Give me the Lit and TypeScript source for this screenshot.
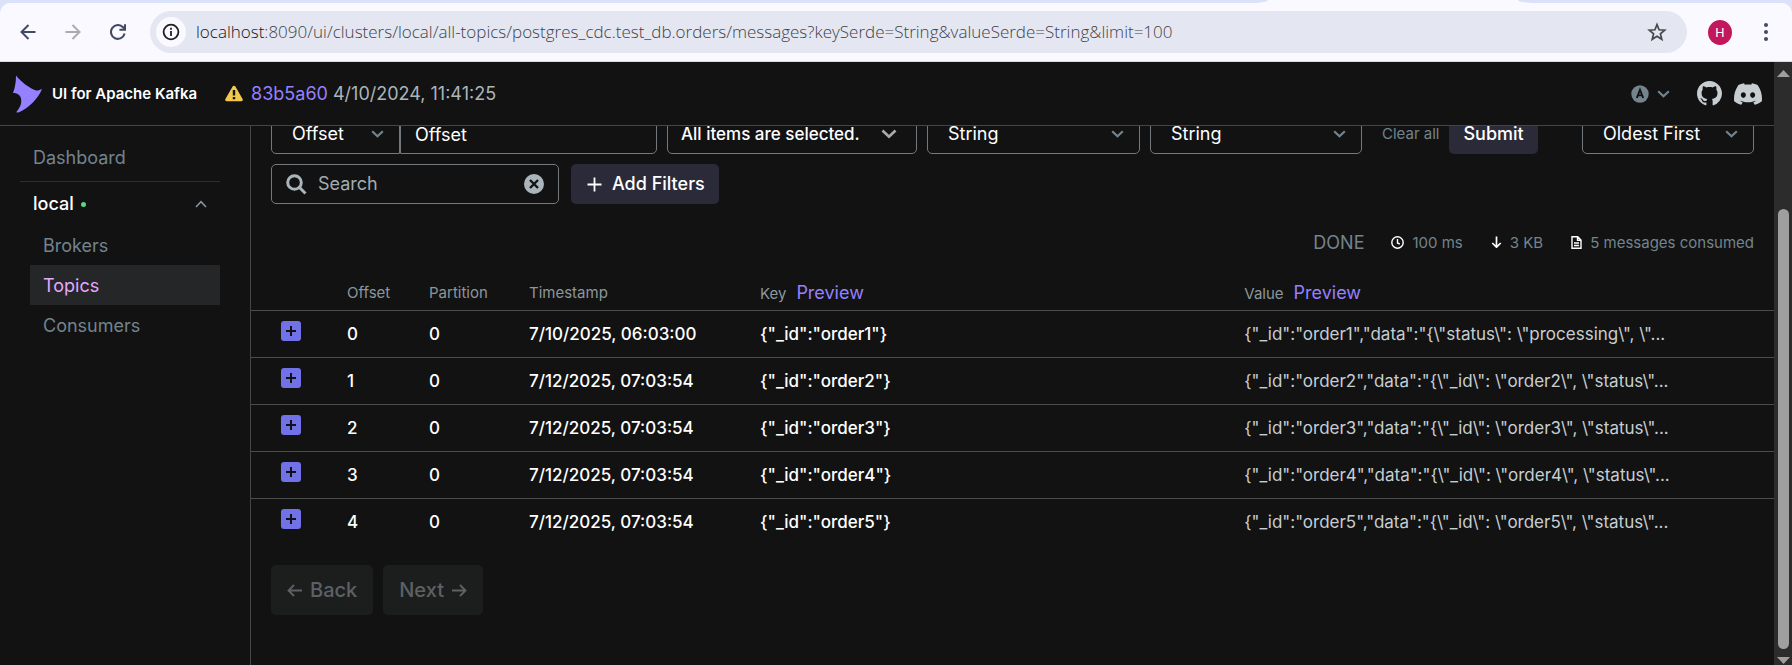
import { LitElement, html, css, svg } from "lit";
import { customElement } from "lit/decorators.js";

interface Message {
  offset: number;
  partition: number;
  timestamp: string;
  key: string;
  value: string;
}

const later = (n: number): Message => ({
  offset: n - 1,
  partition: 0,
  timestamp: "7/12/2025, 07:03:54",
  key: `{"_id":"order${n}"}`,
  value: `{"_id":"order${n}","data":"{\\"_id\\": \\"order${n}\\", \\"status\\"...`,
});

const messages: Message[] = [
  {
    offset: 0,
    partition: 0,
    timestamp: "7/10/2025, 06:03:00",
    key: `{"_id":"order1"}`,
    value: `{"_id":"order1","data":"{\\"status\\": \\"processing\\", \\"...`,
  },
  later(2),
  later(3),
  later(4),
  later(5),
];

const chevron = (width = 13, height = 8) => html`<svg width=${width} height=${height} viewBox="0 0 13 8" aria-hidden="true">
  <path d="M1.2 1.2 6.5 6.2 11.8 1.2" fill="none" stroke="currentColor" stroke-width="2.2" />
</svg>`;

@customElement("browser-bar")
export class BrowserBar extends LitElement {
  static styles = css`
    :host { display: block; background: #d9e2f9; font-family: "Open Sans", "Noto Sans", sans-serif; }
    .tabs { display: flex; height: 3px; background: #faf9ff; }
    .rest { background: #d9e2f9; }
    .before { flex: 1; border-radius: 0 0 16px 0 / 0 0 3px 0; }
    .active { width: 250px; }
    .after { width: 274px; border-radius: 0 0 0 16px / 0 0 0 3px; }
    .bar {
      display: flex; align-items: center; height: 58px; padding: 0 24px 0 16px;
      background: #faf9ff; border-bottom: 1px solid #d5dde0; border-radius: 10px 10px 0 0; color: #414a63;
    }
    button { border: 0; background: none; padding: 0; color: inherit; display: grid; place-items: center; }
    .nav { display: flex; gap: 21px; margin-right: 20px; }
    .nav button { width: 24px; height: 24px; }
    .back, .reload { color: #414a63; }
    .nav .forward { color: #a9abb5; }
    .address {
      flex: 1; display: flex; align-items: center; height: 42px; padding: 0 20px 0 6px;
      background: #e4e7f2; border-radius: 21px; color: #1f1f22;
    }
    .info { width: 30px; height: 30px; border-radius: 50%; background: #faf9ff; margin-right: 10px; }
    .url { flex: 1; font-size: 17px; font-weight: 350; line-height: 24px; color: #414247; white-space: nowrap; }
    .host { color: #131317; }
    .star { color: #46484e; }
    .profile {
      width: 24px; height: 25px; margin: 0 32px 0 21px; border-radius: 50%;
      background: #c2185b; color: #fff; font: 13px/25px Roboto, sans-serif;
    }
  `;

  render() {
    return html`
      <div class="tabs"><div class="rest before"></div><div class="active"></div><div class="rest after"></div></div>
      <div class="bar">
        <div class="nav">
          <button class="back" aria-label="Back"><svg width="16" height="16" viewBox="0 0 16 16" fill="none" stroke="currentColor" stroke-width="2"><path d="M15.5 8H2M8.5 1 1.5 8l7 7" /></svg></button>
          <button class="forward" aria-label="Forward"><svg width="16" height="16" viewBox="0 0 16 16" fill="none" stroke="currentColor" stroke-width="2"><path d="M.5 8H14M7.5 1l7 7-7 7" /></svg></button>
          <button class="reload" aria-label="Reload"><svg width="16" height="16" viewBox="0 0 16 16" fill="none" stroke="currentColor" stroke-width="2.1"><path d="M14.6 9.6A6.9 6.9 0 1 1 13 3.3l1.6 1.8" /><path d="M15 .3v5.5H9.4" /></svg></button>
        </div>
        <div class="address">
          <button class="info" aria-label="Site information"><svg width="18" height="18" viewBox="0 0 18 18" fill="none" stroke="currentColor" stroke-width="1.8"><circle cx="9" cy="9" r="7.4" /><path d="M9 8v5M9 4.8v1.9" /></svg></button>
          <span class="url"><span class="host">localhost</span>:8090/ui/clusters/local/all-topics/postgres_cdc.test_db.orders/messages?keySerde=String&amp;valueSerde=String&amp;limit=100</span>
          <button class="star" aria-label="Bookmark"><svg width="20" height="20" viewBox="0 0 20 20" fill="none" stroke="currentColor" stroke-width="1.7"><path d="M10 2.6l2.1 5.2 5.6.4-4.3 3.6 1.4 5.5L10 14.3l-4.8 3 1.4-5.5-4.3-3.6 5.6-.4z" /></svg></button>
        </div>
        <button class="profile" aria-label="Profile H">H</button>
        <button aria-label="Menu"><svg width="4" height="20" viewBox="0 0 4 20" fill="currentColor"><circle cx="2" cy="3" r="2" /><circle cx="2" cy="10" r="2" /><circle cx="2" cy="17" r="2" /></svg></button>
      </div>
    `;
  }
}

@customElement("app-header")
export class AppHeader extends LitElement {
  static styles = css`
    :host {
      display: flex; align-items: center; height: 63px; padding: 0 12px 0 13px; position: relative; z-index: 1;
      background: #121213; border-bottom: 1px solid #434546; color: #aab5ba; font-size: 18px; line-height: 24px;
    }
    .brand { color: #fff; font-size: 15px; font-weight: 600; margin: 0 28px 0 9px; }
    .version { display: flex; align-items: center; gap: 8px; flex: 1; }
    a { color: #9580ff; text-decoration: none; display: inline-flex; }
    .user { display: flex; align-items: center; gap: 8px; padding: 0; margin-right: 27px; border: 0; background: none; color: #73848c; }
    .social { display: flex; align-items: center; gap: 12px; }
    .social a { color: #c7ced1; }
  `;

  render() {
    return html`
      <svg width="30" height="38" viewBox="0 0 30 38" fill="#9580ff" aria-hidden="true"><path d="M3 0.5C8 7 17 13.5 23 15.5c2 .4 4-.6 6-1.8C26 23 15 33.5 5.5 37.5L3 37.3C7 33 9 28.5 8 23.5 7.5 20 4 18 0 18 2 13 3 7 3 .5z" /></svg>
      <span class="brand">UI for Apache Kafka</span>
      <div class="version">
        <svg width="18" height="17" viewBox="0 0 18 17" aria-hidden="true"><path d="M9 .7c.6 0 1.1.3 1.4.8l7.2 12.5c.6 1.1 0 2.3-1.3 2.3H1.7c-1.3 0-1.9-1.2-1.3-2.3L7.6 1.5C7.9 1 8.4.7 9 .7z" fill="#f2c94c" /><path d="M9 5v5.5M9 12v2.2" stroke="#121213" stroke-width="2.4" /></svg>
        <span><a href="#">83b5a60</a> 4/10/2024, 11:41:25</span>
      </div>
      <button class="user" aria-label="User menu">
        <svg width="18" height="18" viewBox="0 0 18 18" aria-hidden="true"><circle cx="9" cy="9" r="8.7" fill="currentColor" /><path d="M5.8 13 9 4.8 12.2 13M7 10.4h4" fill="none" stroke="#121213" stroke-width="1.9" /></svg>
        ${chevron()}
      </button>
      <div class="social">
        <a href="#" aria-label="GitHub"><svg width="25" height="25" viewBox="0 0 16 16" fill="currentColor"><path d="M8 0C3.58 0 0 3.58 0 8c0 3.54 2.29 6.53 5.47 7.59.4.07.55-.17.55-.38 0-.19-.01-.82-.01-1.49-2.01.37-2.53-.49-2.69-.94-.09-.23-.48-.94-.82-1.13-.28-.15-.68-.52-.01-.53.63-.01 1.08.58 1.23.82.72 1.21 1.87.87 2.33.66.07-.52.28-.87.51-1.07-1.78-.2-3.64-.89-3.64-3.95 0-.87.31-1.59.82-2.15-.08-.2-.36-1.02.08-2.12 0 0 .67-.21 2.2.82.64-.18 1.32-.27 2-.27s1.36.09 2 .27c1.53-1.04 2.2-.82 2.2-.82.44 1.1.16 1.92.08 2.12.51.56.82 1.27.82 2.15 0 3.07-1.87 3.75-3.65 3.95.29.25.54.73.54 1.48 0 1.07-.01 1.93-.01 2.2 0 .21.15.46.55.38A8.01 8.01 0 0 0 16 8c0-4.42-3.58-8-8-8z" /></svg></a>
        <a href="#" aria-label="Discord"><svg width="28" height="22" viewBox="0 2.85 24 18.3" fill="currentColor"><path d="M20.317 4.3698a19.7913 19.7913 0 00-4.8851-1.5152.0741.0741 0 00-.0785.0371c-.211.3753-.4447.8648-.6083 1.2495-1.8447-.2762-3.68-.2762-5.4868 0-.1636-.3933-.4058-.8742-.6177-1.2495a.077.077 0 00-.0785-.037 19.7363 19.7363 0 00-4.8852 1.515.0699.0699 0 00-.0321.0277C.5334 9.0458-.319 13.5799.0992 18.0578a.0824.0824 0 00.0312.0561c2.0528 1.5076 4.0413 2.4228 5.9929 3.0294a.0777.0777 0 00.0842-.0276c.4616-.6304.8731-1.2952 1.226-1.9942a.076.076 0 00-.0416-.1057c-.6528-.2476-1.2743-.5495-1.8722-.8923a.077.077 0 01-.0076-.1277c.1258-.0943.2517-.1923.3718-.2914a.0743.0743 0 01.0776-.0105c3.9278 1.7933 8.18 1.7933 12.0614 0a.0739.0739 0 01.0785.0095c.1202.099.246.1981.3728.2924a.077.077 0 01-.0066.1276 12.2986 12.2986 0 01-1.873.8914.0766.0766 0 00-.0407.1067c.3604.698.7719 1.3628 1.225 1.9932a.076.076 0 00.0842.0286c1.961-.6067 3.9495-1.5219 6.0023-3.0294a.077.077 0 00.0313-.0552c.5004-5.177-.8382-9.6739-3.5485-13.6604a.061.061 0 00-.0312-.0286zM8.02 15.3312c-1.1825 0-2.1569-1.0857-2.1569-2.419 0-1.3332.9555-2.4189 2.157-2.4189 1.2108 0 2.1757 1.0952 2.1568 2.419 0 1.3332-.9555 2.4189-2.1569 2.4189zm7.9748 0c-1.1825 0-2.1569-1.0857-2.1569-2.419 0-1.3332.9554-2.4189 2.1569-2.4189 1.2108 0 2.1757 1.0952 2.1568 2.419 0 1.3332-.946 2.4189-2.1568 2.4189Z" /></svg></a>
      </div>
    `;
  }
}

@customElement("app-sidebar")
export class AppSidebar extends LitElement {
  static styles = css`
    :host { display: block; box-sizing: border-box; width: 251px; padding: 12px 30px 0 20px; border-right: 1px solid #434546; font-size: 18px; line-height: 24px; }
    a { display: flex; align-items: center; height: 40px; padding: 0 13px; color: #73848c; text-decoration: none; }
    .dashboard { padding-bottom: 3px; border-bottom: 1px solid #2b2d2f; }
    .cluster {
      display: flex; align-items: center; width: 100%; height: 40px; margin: 2px 0 1px; padding: 0 13px;
      border: 0; background: none; color: #fff; font: inherit; font-weight: 500;
    }
    .dot { width: 5px; height: 5px; margin-left: 7px; border-radius: 50%; background: #5cd685; }
    .cluster svg { margin-left: auto; }
    .items { margin-left: 10px; }
    .items a { box-sizing: border-box; padding-top: 2px; }
    .current { background: #242628; color: #e5a8ff; }
  `;

  render() {
    return html`
      <nav>
        <a class="dashboard" href="#">Dashboard</a>
        <button class="cluster">
          local<span class="dot"></span>
          <svg width="12" height="8" viewBox="0 0 12 8" aria-hidden="true"><path d="M1 7 6 1.7 11 7" fill="none" stroke="#8b979c" stroke-width="1.5" /></svg>
        </button>
        <div class="items">
          <a href="#">Brokers</a>
          <a class="current" href="#" aria-current="page">Topics</a>
          <a href="#">Consumers</a>
        </div>
      </nav>
    `;
  }
}

@customElement("topic-messages")
export class TopicMessages extends LitElement {
  static styles = css`
    :host { display: block; flex: 1; min-width: 0; margin-top: -12px; font-size: 18px; line-height: 24px; color: #fff; }
    button, select, input { font: inherit; color: inherit; }
    .row { display: flex; padding: 0 20px; }
    .field { box-sizing: border-box; height: 40px; border: 1px solid #73797c; border-radius: 5px; background: none; }
    .select { display: grid; color: #73848c; }
    .select > * { grid-area: 1 / 1; }
    .select svg { justify-self: end; align-self: center; margin-right: 16px; pointer-events: none; }
    .select select { appearance: none; width: 100%; padding: 0 20px; color: #fff; outline: 0; }
    .seek { width: 129px; }
    .seek select { border-radius: 5px 0 0 5px; }
    .offset { width: 257px; padding: 0 14px; border-radius: 0 5px 5px 0; outline: 0; }
    .offset::placeholder { color: #fff; opacity: 1; }
    .partitions { display: flex; align-items: center; justify-content: space-between; width: 250px; margin: 0 10px; padding: 0 19px 0 13px; font-size: 17px; font-weight: 500; }
    .partitions svg { color: #aaa; }
    .serde { width: 213px; margin-right: 10px; }
    .serde + .serde { width: 212px; }
    .clear-all { padding: 0; margin: 0 10px; border: 0; background: none; color: #73848c; font-size: 15px; }
    .primary { display: flex; align-items: center; height: 40px; border: 0; border-radius: 5px; background: #2a2a39; font-weight: 500; }
    .submit { padding: 0 14px; }
    .order { width: 172px; margin-left: auto; }
    .filters { margin-top: 10px; gap: 12px; }
    .search { display: flex; align-items: center; width: 288px; padding: 0 14px; gap: 11px; }
    .search input { flex: 1; min-width: 0; padding: 0; border: 0; background: none; outline: 0; }
    .search input::placeholder { color: #a3acb0; opacity: 1; }
    .search button { display: flex; padding: 0; border: 0; background: none; }
    .add { gap: 10px; padding: 0 14px 0 16px; }
    .stats { justify-content: flex-end; align-items: center; margin-top: 27px; color: #73848c; font-size: 15px; }
    .done { font-size: 18px; margin-right: 27px; }
    .stat { display: flex; align-items: center; gap: 8px; margin-left: 28px; color: #73848c; }
    .done + .stat { margin-left: 0; }
    .stat svg { color: #fff; margin-bottom: 2px; }
    table { width: 100%; margin-top: 19px; border-collapse: collapse; table-layout: fixed; font-size: 17px; }
    th, td { padding: 0; text-align: left; font-weight: 500; white-space: nowrap; overflow: hidden; }
    th { height: 34px; padding-top: 2px; font-size: 15px; font-weight: 400; color: #8b979c; }
    thead tr, tbody tr:not(:last-child) { border-bottom: 1px solid #4a4c4d; }
    tbody td { height: 46px; }
    .c-toggle { width: 96px; }
    .c-offset { width: 82px; }
    .c-partition { width: 100px; }
    .c-time { width: 231px; }
    .c-key { width: 31.8%; }
    .preview { padding: 0; margin-left: 10px; border: 0; background: none; color: #9580ff; font-size: 18px; }
    .expand { display: grid; place-items: center; width: 20px; height: 20px; margin: 0 0 6px 30px; padding: 0; border: 0; border-radius: 3px; background: #7171e8; }
    .value { color: #c7ced1; font-weight: 400; }
    .pager { gap: 10px; margin-top: 20px; }
    .pager button { display: flex; align-items: center; gap: 7px; height: 50px; padding: 0 16px; border: 0; border-radius: 5px; background: #1c1e1e; color: #5c6164; font-size: 20px; font-weight: 500; }
  `;

  private select(cls: string, label: string, value: string) {
    return html`<div class="select ${cls}">
      <select class="field" aria-label=${label}><option>${value}</option></select>
      ${chevron()}
    </div>`;
  }

  private messageRow(m: Message) {
    return html`<tr>
      <td><button class="expand" aria-label="Expand message">
        <svg width="10" height="10" viewBox="0 0 10 10"><path d="M5 0v10M0 5h10" stroke="#121213" stroke-width="2" /></svg>
      </button></td>
      <td>${m.offset}</td>
      <td>${m.partition}</td>
      <td>${m.timestamp}</td>
      <td>${m.key}</td>
      <td class="value">${m.value}</td>
    </tr>`;
  }

  render() {
    const arrow = svg`<path d="M15 6.5H1.5M7 1 1.5 6.5 7 12" fill="none" stroke="currentColor" stroke-width="1.8" />`;
    return html`
      <div class="row">
        ${this.select("seek", "Seek type", "Offset")}
        <input class="field offset" aria-label="Offset" placeholder="Offset" />
        <button class="field partitions">All items are selected.${chevron(16, 10)}</button>
        ${this.select("serde", "Key serde", "String")}
        ${this.select("serde", "Value serde", "String")}
        <button class="clear-all">Clear all</button>
        <button class="primary submit">Submit</button>
        ${this.select("order", "Order", "Oldest First")}
      </div>
      <div class="row filters">
        <label class="field search">
          <svg width="21" height="21" viewBox="0 0 21 21" fill="none" stroke="#a9b5bb" stroke-width="3"><circle cx="8.5" cy="8.5" r="6.8" /><path d="M13.5 13.5l6 6" /></svg>
          <input type="text" placeholder="Search" aria-label="Search" />
          <button aria-label="Clear search"><svg width="20" height="20" viewBox="0 0 20 20"><circle cx="10" cy="10" r="10" fill="#a9b5bb" /><path d="M6 6l8 8M14 6l-8 8" stroke="#121213" stroke-width="2.4" /></svg></button>
        </label>
        <button class="primary add"><svg width="15" height="15" viewBox="0 0 15 15"><path d="M7.5 .5v14M.5 7.5h14" stroke="#fff" stroke-width="1.8" /></svg>Add Filters</button>
      </div>
      <div class="row stats">
        <span class="done">DONE</span>
        <span class="stat"><svg width="13" height="13" viewBox="0 0 13 13" fill="none" stroke="currentColor" stroke-width="1.4"><circle cx="6.5" cy="6.5" r="5.7" /><path d="M6.5 3v4l2.3 1" /></svg>100 ms</span>
        <span class="stat"><svg width="11" height="12" viewBox="0 0 11 12" fill="none" stroke="currentColor" stroke-width="1.7"><path d="M5.5 .5v10.5M1.3 7l4.2 4.2L9.7 7" /></svg>3 KB</span>
        <span class="stat"><svg width="11" height="13" viewBox="0 0 11 13" fill="none" stroke="currentColor" stroke-width="1.4"><path d="M1 .8h5.7L10 4v8.2H1zM6.5 1v3.3H10M3 7h5M3 9.5h5" /></svg>5 messages consumed</span>
      </div>
      <table>
        <colgroup><col class="c-toggle" /><col class="c-offset" /><col class="c-partition" /><col class="c-time" /><col class="c-key" /><col /></colgroup>
        <thead>
          <tr>
            <th></th><th>Offset</th><th>Partition</th><th>Timestamp</th>
            <th>Key<button class="preview">Preview</button></th>
            <th>Value<button class="preview">Preview</button></th>
          </tr>
        </thead>
        <tbody>${messages.map((m) => this.messageRow(m))}</tbody>
      </table>
      <div class="row pager">
        <button disabled><svg width="16" height="13" viewBox="0 0 16 13">${arrow}</svg>Back</button>
        <button disabled>Next<svg width="16" height="13" viewBox="0 0 16 13"><g transform="translate(16 0) scale(-1 1)">${arrow}</g></svg></button>
      </div>
    `;
  }
}

@customElement("app-root")
export class AppRoot extends LitElement {
  static styles = css`
    :host { display: flex; flex-direction: column; height: 100vh; overflow: hidden; background: #121213; font-family: Inter, sans-serif; }
    .window { flex: 1; display: flex; min-height: 0; }
    .page { flex: 1; min-width: 0; display: flex; flex-direction: column; }
    .body { flex: 1; display: flex; min-height: 0; }
    .scrollbar { display: flex; flex-direction: column; align-items: center; width: 18px; padding: 8px 0 1px; box-sizing: border-box; background: #2c2c2c; }
    .track { flex: 1; display: flex; flex-direction: column; justify-content: flex-end; padding: 8px 0; }
    .thumb { width: 11px; height: 78%; border-radius: 6px; background: #9f9f9f; }
  `;

  render() {
    return html`
      <browser-bar></browser-bar>
      <div class="window">
        <div class="page">
          <app-header></app-header>
          <div class="body">
            <app-sidebar></app-sidebar>
            <topic-messages></topic-messages>
          </div>
        </div>
        <div class="scrollbar" aria-hidden="true">
          <svg width="13" height="7" viewBox="0 0 13 7"><path d="M6.5 0 13 7H0z" fill="#9f9f9f" /></svg>
          <div class="track"><div class="thumb"></div></div>
          <svg width="13" height="7" viewBox="0 0 13 7"><path d="M0 0h13L6.5 7z" fill="#9f9f9f" /></svg>
        </div>
      </div>
    `;
  }
}
